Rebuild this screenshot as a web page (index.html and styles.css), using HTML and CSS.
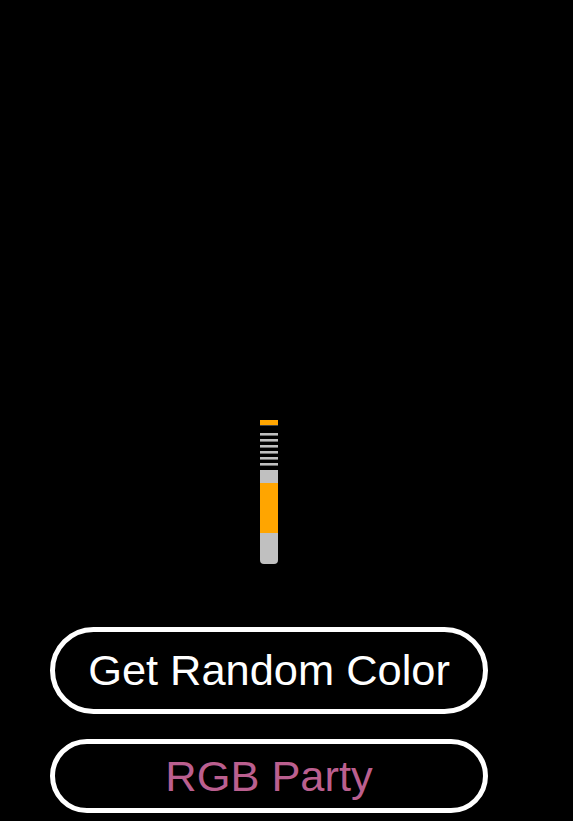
FILE: index.html
```html
<!DOCTYPE html>
<html>
<head>
<meta charset="utf-8">
<link rel="stylesheet" href="styles.css">
</head>
<body>
<div class="page">
  <div class="stage">
    <div class="hilt">
      <div class="cap"></div>
      <div class="grip">
        <div class="ring"></div>
        <div class="ring"></div>
        <div class="ring"></div>
        <div class="ring"></div>
        <div class="ring"></div>
        <div class="ring"></div>
      </div>
      <div class="body">
        <div class="band-top"></div>
        <div class="band-color"></div>
        <div class="band-bottom"></div>
      </div>
    </div>
  </div>
  <div class="controls">
    <button class="btn btn-main">Get Random Color</button>
    <button class="btn btn-party">RGB Party</button>
  </div>
</div>
</body>
</html>
```
FILE: styles.css
```css
html, body {
  margin: 0;
  padding: 0;
  background: #000;
  height: 100%;
  overflow: hidden;
}
.page {
  width: 438px;
  padding-left: 50px;
  display: flex;
  flex-direction: column;
}
.stage {
  padding-top: 420px;
  display: flex;
  justify-content: center;
}
.hilt {
  width: 18px;
  display: flex;
  flex-direction: column;
}
.cap {
  height: 5px;
  background: #ffa500;
  border-bottom: 1px solid #444;
}
.grip {
  display: flex;
  flex-direction: column;
  gap: 3px;
  padding-top: 7px;
}
.ring {
  height: 2px;
  background: #c0c0c0;
  border-bottom: 1px solid #707070;
}
.body {
  margin-top: 4px;
  display: flex;
  flex-direction: column;
  border-radius: 0 0 4px 4px;
  overflow: hidden;
}
.band-top {
  height: 13px;
  background: #c0c0c0;
}
.band-color {
  height: 50px;
  background: #ffa500;
}
.band-bottom {
  height: 31px;
  background: #c0c0c0;
}
.controls {
  display: flex;
  flex-direction: column;
  gap: 25px;
  margin-top: 63px;
}
.btn {
  width: 438px;
  box-sizing: border-box;
  background: #000;
  border: 5px solid #fff;
  border-radius: 50px;
  font-family: "Liberation Sans", Arial, sans-serif;
  font-size: 43.4px;
  line-height: 49px;
  text-align: center;
  margin: 0;
}
.btn-main {
  color: #fff;
  padding: 14px 0;
  height: 87px;
}
.btn-party {
  color: #bb5f8f;
  padding: 7px 0;
  height: 74px;
}
```
